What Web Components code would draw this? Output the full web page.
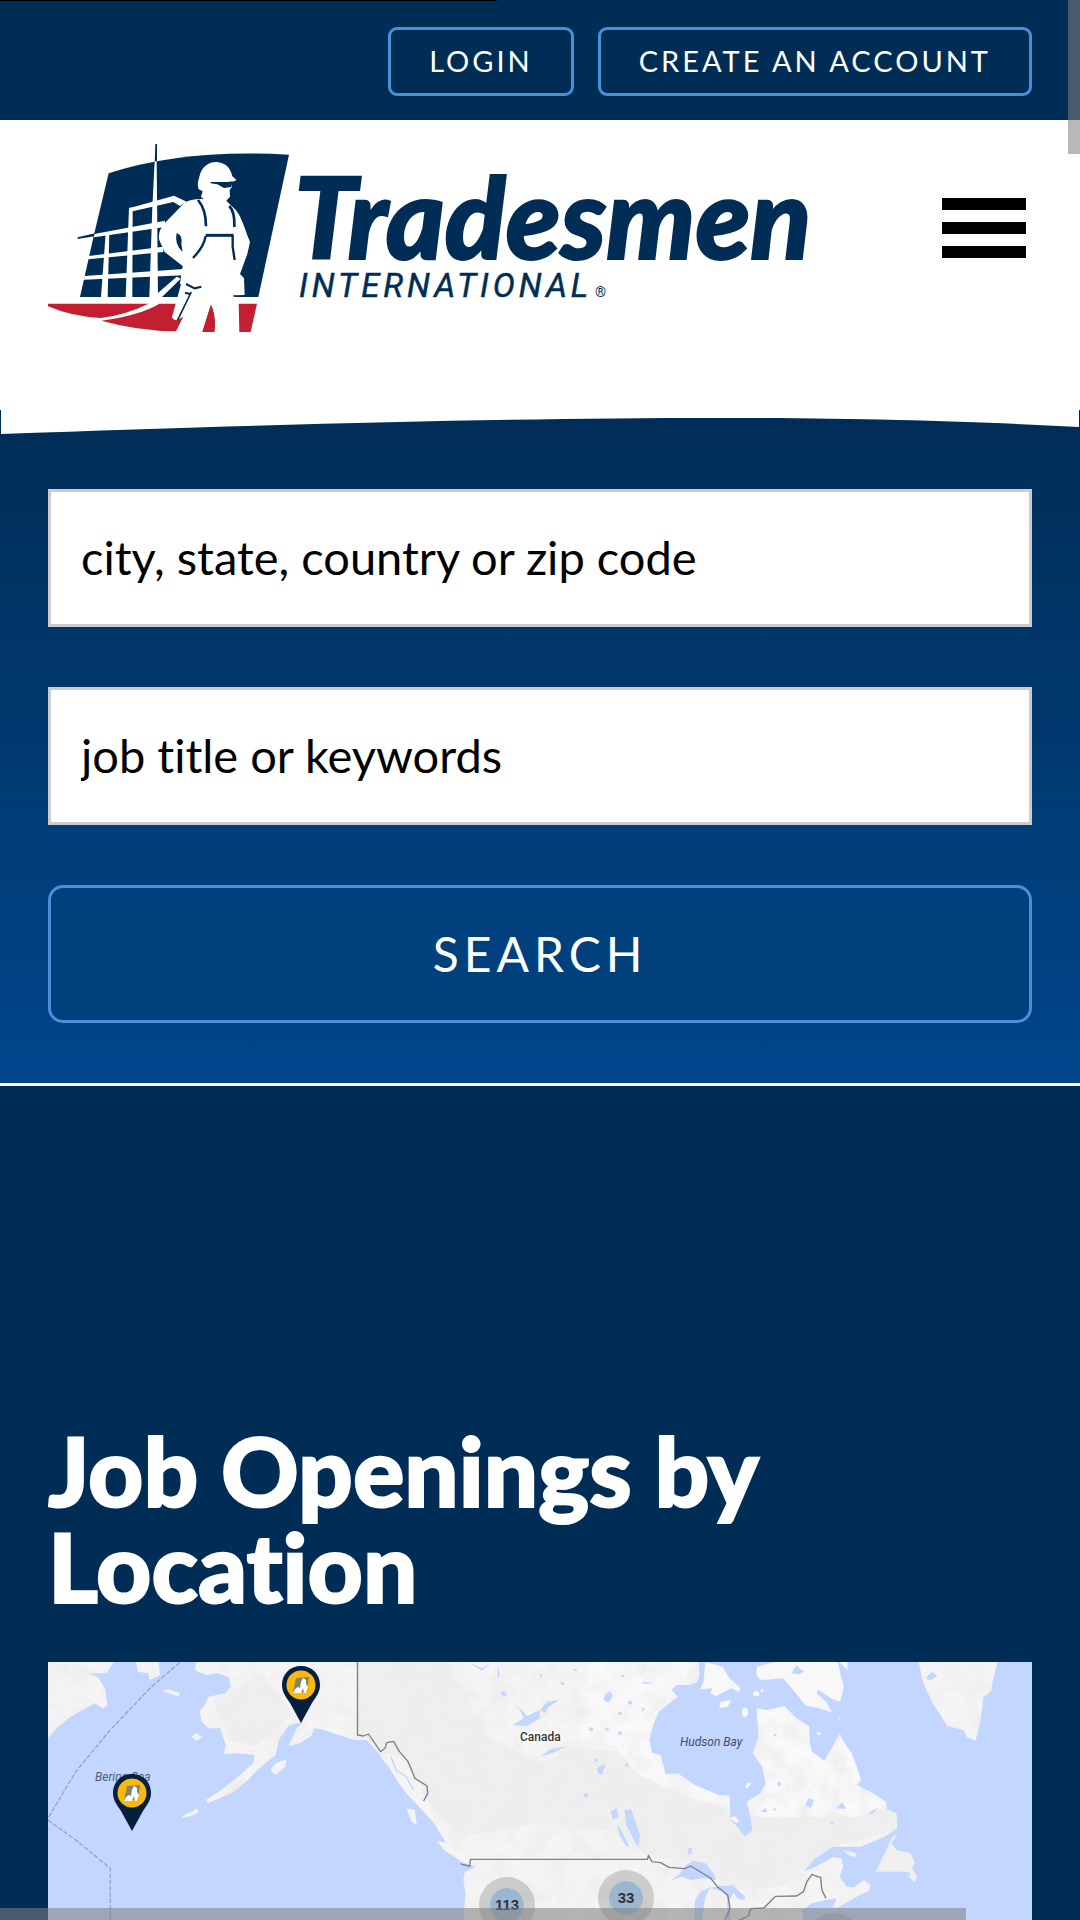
<!DOCTYPE html>
<html lang="en">
<head>
<meta charset="utf-8">
<meta name="viewport" content="width=device-width, initial-scale=1">
<title>Tradesmen International</title>
<style>
html, body { margin: 0; height: 100%; }
body { font-family: Lato, "Open Sans", sans-serif; font-variant-ligatures: none; background: #002d56; color: #fff; overflow: hidden; }
</style>
</head>
<body>
<tm-page>
  <tm-topbar>
    <tm-button>Login</tm-button>
    <tm-button>Create an Account</tm-button>
  </tm-topbar>
  <tm-header><tm-logo></tm-logo></tm-header>
  <tm-search>
    <tm-field label="city, state, country or zip code"></tm-field>
    <tm-field label="job title or keywords"></tm-field>
    <tm-button size="large">Search</tm-button>
  </tm-search>
  <tm-locations>
    <span slot="title">Job Openings by Location</span>
    <tm-map>
      <tm-pin style="left:253px;top:4px"></tm-pin>
      <tm-pin style="left:84px;top:112px"></tm-pin>
      <tm-cluster style="left:459px;top:243px">113</tm-cluster>
      <tm-cluster style="left:578px;top:236px">33</tm-cluster>
      <tm-cluster style="left:786px;top:279px"></tm-cluster>
    </tm-map>
  </tm-locations>
</tm-page>
<script>
const define = (name, html) => customElements.define(name, class extends HTMLElement {
  constructor() {
    super();
    this.attachShadow({ mode: 'open' }).innerHTML = html;
  }
});

define('tm-page', `
<style>
:host { display: flex; flex-direction: column; height: 100vh; position: relative; overflow: hidden; }
.progress { position: absolute; left: 0; top: 0; width: 46%; height: 1px; background: #000; }
.bar { position: absolute; background: rgba(128,128,128,.56); z-index: 5; }
.v { right: 0; top: 0; width: 12px; height: 8%; }
.h { left: 0; bottom: 0; height: 12px; right: 114px; }
</style>
<slot></slot><div class="progress"></div><div class="bar v"></div><div class="bar h"></div>`);

define('tm-topbar', `
<style>
:host { display: flex; justify-content: flex-end; align-items: center; gap: 24px; padding: 27px 48px 24px; background: #002d56; }
</style><slot></slot>`);

define('tm-button', `
<style>
:host { display: block; }
button { display: block; width: 100%; height: 69px; box-sizing: border-box; margin: 0; padding: 0 38px 2px; border: 3px solid #4a90d9;
  border-radius: 9px; background: transparent; color: #fff; font: 400 29px/36px Lato, sans-serif; letter-spacing: 3px;
  text-transform: uppercase; white-space: nowrap; cursor: pointer; }
:host([size=large]) button { height: 138px; border-radius: 15px; background: #00407d; font-size: 48px; line-height: 58px; letter-spacing: 5px; padding-bottom: 0; }
</style><button type="button"><slot></slot></button>`);

define('tm-header', `
<style>
:host { display: block; background: #fff; padding: 0 54px 74px 48px; }
.row { display: flex; justify-content: space-between; align-items: center; height: 216px; }
::slotted(*) { align-self: flex-end; }
button { display: flex; flex-direction: column; gap: 12px; width: 84px; padding: 0; border: 0; background: none; cursor: pointer; }
i { display: block; height: 12px; background: #000; }
</style>
<div class="row"><slot></slot><button type="button" aria-label="Menu"><i></i><i></i><i></i></button></div>`);

define('tm-logo', `
<style>:host { display: block; } svg { display: block; overflow: visible; }</style>
<svg width="780" height="192" viewBox="0 0 780 192" role="img" aria-label="Tradesmen International">
  <g transform="scale(.333333) translate(-24 -42)">
    <path fill="#002d56" d="M206 130Q430 56 747 74L655 501H120L163 310Z"/>
    <path fill="#002d56" d="M346 42h5v60h-7zM113 322l55-13v9l-55 9z"/>
    <path fill="#c41f30" d="M24 521H326Q256 555 182 564Q96 560 24 529ZM184 572Q300 556 358 521H416L396 560Q398 569 411 571L430 560L408 604Q290 602 184 572ZM513 522Q530 560 524 606H486ZM596 521H651L632 606H598Z"/>
    <g fill="#fff">
      <path d="M344 94h6l4 407h-26l9-270z"/>
      <path d="M267 234l11-2-1 269h-20zM197 310h11l-5 191h-20z"/>
      <path d="M163 312L375 272V291L162 322ZM146 378L370 350V366L145 388ZM133 438L430 417V436L132 449Z"/>
      <path d="M267 235L402 197L440 215L420 228L400 216L268 246Z"/>
      <path d="M340 501L410 440L422 446L366 501Z"/>
      <path d="M476 178C470 160 476 150 478 140C486 106 510 94 532 96C560 100 572 116 577 139L590 150L575 157L576 170L569 180L570 200L559 212L578 231C604 250 612 294 630 336L622 372L600 432L612 444L614 494L578 502L597 606H524Q530 550 512 522L486 606H408L445 570L446 500L420 460L428 408L374 366L358 331Q352 304 374 280L424 228Q438 210 468 208L491 206L483 200L488 184Z"/>
      <path d="M425 455L461 473L410 571L396 562Z"/>
    </g>
    <g fill="none" stroke="#002d56" stroke-width="9">
      <path d="M474 210Q498 238 498 289M568 228Q585 246 583 291" stroke-width="8"/>
      <path d="M497 316H581"/>
      <path d="M497 318Q492 350 459 384M578 318L578 350L584 390" stroke-width="7"/>
      <path d="M454 486L412 572" stroke-width="5"/>
      <path d="M438 462L464 475L484 470M435 488L450 492" stroke-width="6"/>
      <path d="M580 498H614" stroke-width="5"/>
    </g>
    <path fill="#002d56" d="M410 309Q429 316 424 342L428 366Q402 342 410 309ZM512 156H563L578 154L574 171L552 174L532 163L512 160Z"/>
  </g>
  <text x="246" y="115" font-family="'Lato Black', Lato" font-weight="900" font-style="italic" font-size="112" fill="#002d56" stroke="#002d56" stroke-width="2">Tradesmen</text>
  <text x="251" y="153" font-family="Roboto" font-style="italic" font-size="33" letter-spacing="4" fill="#002d56" stroke="#002d56" stroke-width=".5">INTERNATIONAL</text>
  <text x="547" y="153" font-family="Roboto" font-size="14" fill="#002d56">®</text>
</svg>`);

define('tm-search', `
<style>
:host { display: block; background: linear-gradient(#002d56, #00468c); border-bottom: 3px solid #fff; }
svg { display: block; width: calc(100% - 2px); height: 24px; margin: 0 1px 55px; }
form { display: flex; flex-direction: column; gap: 60px; padding: 0 48px 60px; }
</style>
<svg viewBox="0 0 1080 24" preserveAspectRatio="none" aria-hidden="true"><path fill="#fff" d="M0 0H1080V17C840 4 560 4 0 24Z"/></svg>
<form><slot></slot></form>`);

customElements.define('tm-field', class extends HTMLElement {
  constructor() {
    super();
    this.attachShadow({ mode: 'open' }).innerHTML = `
<style>
:host { display: block; }
input { display: block; width: 100%; height: 138px; box-sizing: border-box; margin: 0; padding: 0 30px 2px; border: 3px solid #ccc;
  border-radius: 0; background: #fff; color: #000; font: 400 47px/58px Lato, sans-serif; font-variant-ligatures: none; }
input::placeholder { color: #000; opacity: 1; }
</style><input type="text">`;
  }
  connectedCallback() {
    const input = this.shadowRoot.querySelector('input');
    const label = this.getAttribute('label');
    input.placeholder = label;
    input.setAttribute('aria-label', label);
  }
});

define('tm-locations', `
<style>
:host { display: flex; flex-direction: column; flex: 1; gap: 48px; padding: 336px 48px 0; background: #002d56; }
h1 { margin: 0; font: 900 96px/96px "Lato Black", Lato, sans-serif; font-variant-ligatures: none; -webkit-text-stroke: 2px #fff; color: #fff; }
::slotted(tm-map) { flex: 1; }
</style>
<h1><slot name="title"></slot></h1><slot></slot>`);

define('tm-pin', `
<style>:host { display: block; position: absolute; width: 38px; margin-left: -19px; }
button { display: block; padding: 0; border: 0; background: none; cursor: pointer; } svg { display: block; }</style>
<button type="button" aria-label="Job location"><svg width="38" height="57" viewBox="0 0 38 57">
<path fill="#05203f" d="M19 0C8 0 0 8 0 19C0 26 4 31 8 37L19 57L30 37C34 31 38 26 38 19C38 8 30 0 19 0Z"/>
<circle cx="19" cy="19" r="14.5" fill="#f7b90f"/>
<path fill="#8a8268" d="M14 12L27 11L25 26H11Z"/>
<path fill="#fff" d="M21 12l3 2v4l2 3-2 6h-2l-1-5-2 5h-8l2-4 3-2 2 1 1-6z"/></svg></button>`);

define('tm-cluster', `
<style>:host { display: block; position: absolute; width: 56px; height: 56px; margin: -28px 0 0 -28px; }
button { width: 56px; height: 56px; padding: 0; border: 11px solid rgba(150,150,150,.42); border-radius: 50%; background: #9bb6d1; background-clip: padding-box;
 color: #333; font: 700 15px/18px "Liberation Sans", sans-serif; cursor: pointer; }</style>
<button type="button"><slot></slot></button>`);

define('tm-map', `
<style>
:host { display: block; position: relative; overflow: hidden; min-height: 240px; background: #f1f1f1; }
svg { display: block; position: absolute; inset: 0; width: 100%; height: 100%; }
</style>
<svg viewBox="0 0 984 258" preserveAspectRatio="xMidYMin slice" role="img" aria-label="Map of job openings">
<defs><filter id="relief" x="0" y="0" width="100%" height="100%"><feTurbulence type="fractalNoise" baseFrequency=".05" numOctaves="5" seed="8"/>
<feColorMatrix values="0 0 0 0 .83  0 0 0 0 .83  0 0 0 0 .83  1.6 0 0 0 -.6"/></filter></defs>
<rect width="984" height="258" fill="#f5f5f5"/>
<g transform="translate(-48 -12) scale(.34439 .333333)">
  <path fill="#e9e9e9" opacity=".55" d="M900 36L1037 36V250L1110 300L1240 450L1330 560L1568 520V340L1400 250L1350 120L1290 36ZM620 150L760 70L850 190L740 290L670 270Z"/>
</g>
<g transform="translate(492 -12) scale(.34439 .333333)">
  <path fill="#e9e9e9" opacity=".55" d="M0 340L100 300L220 300L290 370L450 430L560 500L600 560L620 500H930L1000 470L1035 490L1030 540L850 590L700 710L580 720L430 635L320 620L200 540L0 520Z"/>
  <path fill="#fafafa" opacity=".8" d="M100 36H460L345 190L320 300L365 375L550 440V480L400 430L280 370L220 290L120 270ZM625 170L720 170L870 260L1000 460L930 500L610 500L600 450L655 400Z"/>
</g>
<rect width="984" height="258" filter="url(#relief)"/>
<g transform="translate(-48 -12) scale(.34439 .333333)">
  <path fill="#c2d6ff" d="M139 265L165 235L205 200L275 160L300 175L312 165L305 115L285 82L255 70L310 70L330 36H395L400 65L430 70L435 90L465 75L460 36H570L565 60L600 75L630 70L665 82L670 110L655 130L605 140L595 165L580 182L585 215L605 235L640 235L655 285L650 312L690 310L740 315L735 340L715 358L700 372L650 415L598 450L604 460L680 425L725 385L742 365L770 340L800 315L812 265L840 225L880 216L862 235L838 288L870 280L905 257L912 235L940 240L1030 270L1065 270L1100 310L1130 360L1180 430L1230 485L1260 520L1290 570L1340 635L1380 650L1350 665L1345 690L1352 730L1345 815H139Z"/>
  <path fill="#f4f4f4" d="M470 122L490 118L522 130L520 140L490 130ZM555 260L570 250L588 262L570 272ZM785 360L800 340L832 328L828 350L800 375ZM525 505L540 492L560 485L570 475L578 485L555 498ZM1180 475L1205 480L1210 525L1195 515ZM1268 572L1300 580L1360 632L1340 635L1290 600ZM1120 310L1160 320L1220 400L1230 440L1205 445L1165 400Z"/>
  <path fill="none" stroke="#c2d6ff" stroke-width="4" d="M1135 320L1150 360L1180 380L1200 420M1120 340L1150 390"/>
  <path fill="#c2d6ff" d="M1490 225L1520 205L1510 180L1490 160L1515 180L1530 198L1568 180V205L1530 228ZM1365 40L1400 55L1425 38L1400 62ZM1453 130l10-8 10 14-15 2zM1445 45l6 30-6 12z"/>
  <path fill="none" stroke="#808086" stroke-width="4" stroke-linejoin="round" d="M1038 36V255L1055 258L1070 252L1085 275L1105 305L1118 295L1123 278L1143 274L1160 305L1185 335L1205 385L1240 408L1242 430L1230 453M1338 642L1364 649L1366 628H1568"/>
  <path fill="none" stroke="#988fb6" stroke-width="3" stroke-dasharray="14 5" d="M522 38L440 110L320 240L220 365L139 505M139 510L220 570L320 655V815"/>
</g>
<g transform="translate(492 -12) scale(.34439 .333333)">
  <path fill="#c2d6ff" d="M462 36V80L455 98L430 105L395 105L382 120L400 140L370 165L345 185L330 220L318 270L325 308L350 315L365 372L400 370L450 405L520 435L550 437L553 510L568 525L595 560L617 540L607 480L600 455L640 430L655 400L645 350L618 310L635 260L628 175L660 180L710 168L740 200L782 230L783 280L790 305L825 332L850 290L870 250L885 280L905 310L920 350L932 390L920 405L960 425L1005 455L1007 478L1035 490L1037 535L1000 560L930 590L850 590L800 625L765 665L800 650L850 622L875 625L880 650L870 680L890 710L912 712L940 690L960 705L955 722L920 740L860 775L850 770L862 745L830 750L790 760L760 780L765 815H1429V36H1328L1315 90L1310 125L1288 140L1280 205L1265 272L1240 262L1230 240L1182 228L1160 190L1140 160L1122 120L1110 90L1100 36Z"/>
  <path fill="#f8f8f8" d="M480 36L530 50L550 85L583 115L575 125L555 115L510 138L495 130L500 115L465 118L475 95ZM630 50L680 36H865L873 75L882 110L872 155L850 148L805 118L805 132L830 155L848 187L810 175L770 165L735 120L705 85L640 90L628 75ZM520 175L525 155L555 150L545 170ZM870 36H893V60ZM550 505L565 498L578 512L570 518ZM595 410l8-12 10 2-10 15zM865 203l8 1-2 6z"/>
  <ellipse cx="595" cy="187" rx="9" ry="15" fill="#f8f8f8"/><ellipse cx="628" cy="131" rx="9" ry="8" fill="#f8f8f8"/><circle cx="645" cy="122" r="5" fill="#f8f8f8"/><ellipse cx="809" cy="250" rx="6" ry="5" fill="#f8f8f8"/>
  <path fill="#efefef" d="M1040 550L1020 565L1010 590L975 665L1060 665L1078 670L1070 680L1088 697L1095 680L1080 655L1090 640L1075 610L1035 600L1020 580ZM880 600L920 610L915 622L895 615Z"/>
  <g fill="#c2d6ff">
    <path d="M245 480L265 478L275 510L290 555L285 590L270 565L250 525ZM205 485l18-12 5 30-18 5zM225 520L245 560L260 590L250 588L230 555ZM380 692L405 672L425 645L445 632L480 640L502 668L512 690L475 685L440 690L410 680ZM448 815L450 750L465 725L495 712L480 740L470 815ZM495 714L520 708L560 706L595 740L594 750L575 748L562 728L550 750L553 815H545L543 740L530 725ZM0 180L20 155L55 150L25 170L15 190ZM0 320L30 298L78 288L35 310ZM188 135l15-12 8 15-12 20-14-8zM165 355L190 342L180 375L170 372ZM730 70l15-25 10 12 12 8-15 8zM1120 85l18-20 15 12-20 14zM770 465l10-20 15 5-8 24zM860 475l18-18 10 20zM640 485l16-12 3 14zM675 480l6-8 6 10zM950 490l32-17-18 20zM430 595l10-2 3 18-12 4zM295 95l35 3-25 4zM0 70l8 5-8 8z"/>
    <circle cx="65" cy="100" r="5"/><circle cx="148" cy="238" r="6"/><circle cx="232" cy="190" r="5"/><circle cx="262" cy="158" r="6"/><circle cx="240" cy="78" r="4"/><circle cx="232" cy="250" r="6"/><circle cx="252" cy="345" r="5"/><circle cx="195" cy="238" r="5"/><circle cx="133" cy="436" r="6"/><circle cx="695" cy="402" r="6"/><circle cx="163" cy="330" r="5"/><circle cx="300" cy="178" r="4"/><circle cx="103" cy="60" r="4"/><circle cx="682" cy="255" r="4"/><circle cx="848" cy="518" r="4"/>
  </g>
  <path fill="none" stroke="#808086" stroke-width="4" stroke-linejoin="round" d="M0 628H312L315 616L325 635L350 638L375 652L420 656L437 648L495 684L515 710L545 735L552 775L535 815M570 815L605 798L612 776L650 774L684 739L745 738L765 725L775 695L790 673L800 678L815 682L818 718L830 745"/>
</g>
<g font-family="Roboto" font-size="12">
  <text x="47" y="119" fill="#555b78" font-style="italic">Bering Sea</text>
  <text x="472" y="79" fill="#333" font-weight="500" stroke="#fff" stroke-width="3" paint-order="stroke">Canada</text>
  <text x="632" y="84" fill="#444c6c" font-style="italic">Hudson Bay</text>
</g>
</svg>
<slot></slot>`);
</script>
</body>
</html>
